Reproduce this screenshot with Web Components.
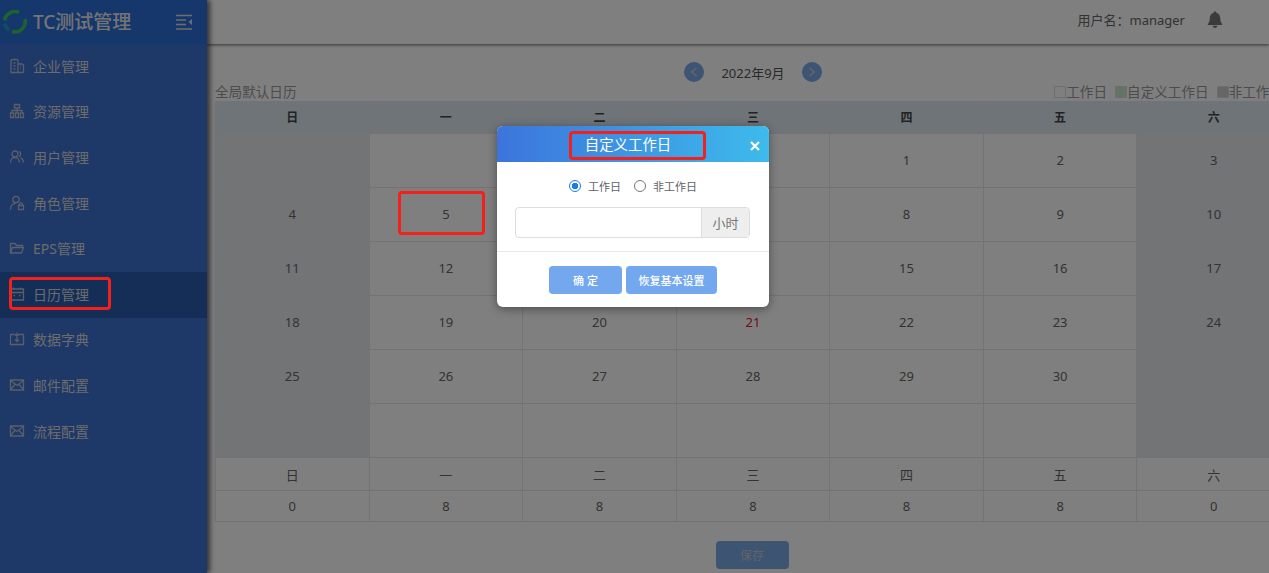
<!DOCTYPE html>
<html lang="zh">
<head>
<meta charset="utf-8">
<title>日历管理</title>
<style>
  html, body { margin: 0; height: 100%; overflow: hidden; background: #fff; }
  body { font-family: "Noto Sans", "Noto Sans CJK SC", sans-serif; color: #666; }
</style>
</head>
<body>
<app-page>
  <side-nav slot="side">
    <nav-item icon="building">企业管理</nav-item>
    <nav-item icon="org">资源管理</nav-item>
    <nav-item icon="users">用户管理</nav-item>
    <nav-item icon="role">角色管理</nav-item>
    <nav-item icon="folder">EPS管理</nav-item>
    <nav-item icon="calendar" active>日历管理</nav-item>
    <nav-item icon="book">数据字典</nav-item>
    <nav-item icon="mail">邮件配置</nav-item>
    <nav-item icon="mail">流程配置</nav-item>
  </side-nav>
  <top-bar slot="top"></top-bar>
  <calendar-view slot="main"></calendar-view>
  <work-dialog slot="over"></work-dialog>
  <red-mark slot="over" style="left:9px;top:277px;width:102px;height:33px"></red-mark>
  <red-mark slot="over" style="left:398px;top:191px;width:87px;height:44px"></red-mark>
  <red-mark slot="over" style="left:569px;top:131px;width:137px;height:29px"></red-mark>
</app-page>

<script>
const ICONS = {
  building: '<path d="M2 14.500V2.500l2-1h4l1 1v12M9 6h4l1.500 1v7.500M1.500 14.500h13M4.500 5h2M4.500 8h2M4.500 11h2M11.500 8.500h.6M11.500 11h.6"/>',
  org: '<path d="M5.500 1.500h5v3.500h-5zM8 5v2.500M3 10V7.500h10V10M8 7.500V10M1.500 10h3v4.500h-3zM6.500 10h3v4.500h-3zM11.500 10h3v4.500h-3z"/>',
  users: '<circle cx="6" cy="5" r="3"/><path d="M1.500 13.500c0-3 2-5 4.500-5s4.500 2 4.500 5M10 2.300a3 3 0 0 1 0 5.400M11.500 8.800c1.800.7 3 2.500 3 4.700"/>',
  role: '<circle cx="7" cy="4.500" r="3.200"/><path d="M1.500 14.500c0-3.500 2-6 5-6M9.500 10.500h5v4h-5zM10.500 10.500V9.300a1.500 1.500 0 0 1 3 0v1.200"/>',
  folder: '<path d="M1.500 13V3.500h4.500l1.500 2h6v2M1.500 13l2-5.500h11l-2 5.500z"/>',
  calendar: '<path d="M1.500 3h13v11h-13zM1.500 6.500h13M4.500 1.500V3M11.500 1.500V3M4.500 9.500h1.500M10 9.500h1.500"/>',
  book: '<path d="M1.500 3.500h4.500l2 1.500 2-1.500h4.500v10h-13zM8 1.500v9M6 8.500l2 2 2-2"/>',
  mail: '<path d="M1.500 3h13v10h-13zM1.500 3.500l6.500 5 6.500-5M1.500 12.500l4.500-5M14.500 12.500l-4.500-5"/>'
};

class AppPage extends HTMLElement {
  constructor() {
    super();
    this.attachShadow({ mode: 'open' });
    this.shadowRoot.innerHTML = `
      <style>
        :host { display: block; position: relative; width: 1269px; height: 573px; overflow: hidden; }
        .layout { display: grid; grid-template-columns: 207px 1fr; height: 100%; }
        .right { display: flex; flex-direction: column; min-width: 0; }
        .veil { position: absolute; inset: 0; z-index: 5; background: rgba(0, 0, 0, 0.5); }
      </style>
      <div class="layout">
        <slot name="side"></slot>
        <div class="right">
          <slot name="top"></slot>
          <slot name="main"></slot>
        </div>
      </div>
      <div class="veil"></div>
      <slot name="over"></slot>
    `;
  }
}

class RedMark extends HTMLElement {
  constructor() {
    super();
    this.attachShadow({ mode: 'open' });
    this.shadowRoot.innerHTML = `
      <style>
        :host { display: block; position: absolute; z-index: 7; box-sizing: border-box; border: 3px solid #f3211c; border-radius: 4px; }
      </style>
    `;
  }
}

class SideNav extends HTMLElement {
  constructor() {
    super();
    this.attachShadow({ mode: 'open' });
    this.shadowRoot.innerHTML = `
      <style>
        :host { display: block; position: relative; z-index: 2; background: #3c70d0; box-shadow: 3px 0 5px rgba(0, 0, 0, 0.6); }
        .brand { height: 44px; display: flex; align-items: center; background: #2a6fd8; padding: 0 14px 0 3px; }
        .brand svg.logo { width: 24px; height: 24px; flex: none; }
        .name { margin-left: 6px; flex: 1; font-size: 19px; font-weight: 500; color: #e8e8e8; white-space: nowrap; padding-bottom: 2px; }
        .fold { width: 17px; height: 16px; flex: none; }
      </style>
      <div class="brand">
        <svg class="logo" viewBox="0 0 24 24" fill="none" stroke-width="3.600">
          <path d="M1.600 10.500A10.500 10.500 0 0 1 16 2.300" stroke="#3cc45a"/>
          <path d="M22 9A10.500 10.500 0 0 1 9 21.600" stroke="#3cc45a"/>
          <path d="M1.800 13.500A10.500 10.500 0 0 0 6 20" stroke="#1f9fc8"/>
        </svg>
        <span class="name">TC测试管理</span>
        <svg class="fold" viewBox="0 0 17 16" fill="none" stroke="#ddd" stroke-width="1.500">
          <path d="M0 1.500h16M0 6h10M0 10.500h10M0 15h16"/>
          <path d="M16 5v6l-3.500-3z" fill="#ddd" stroke="none"/>
        </svg>
      </div>
      <slot></slot>
    `;
  }
}

class NavItem extends HTMLElement {
  connectedCallback() {
    if (this.shadowRoot) return;
    this.attachShadow({ mode: 'open' });
    this.shadowRoot.innerHTML = `
      <style>
        :host { display: flex; align-items: center; height: 45.600px; box-sizing: border-box; padding: 0 0 2px 9px; color: #d8d8d8; font-size: 14px; white-space: nowrap; }
        :host([active]) { background: #2a5cb0; }
        svg { width: 16px; height: 16px; margin-right: 8px; flex: none; stroke: #b4bed2; fill: none; stroke-width: 1.300; }
      </style>
      <svg viewBox="0 0 16 16">${ICONS[this.getAttribute('icon')] || ''}</svg>
      <slot></slot>
    `;
  }
}

class TopBar extends HTMLElement {
  constructor() {
    super();
    this.attachShadow({ mode: 'open' });
    this.shadowRoot.innerHTML = `
      <style>
        :host { display: flex; justify-content: flex-end; align-items: center; flex: none; height: 44px; background: #fff; box-shadow: 0 1px 3px rgba(0, 0, 0, 0.6); padding: 0 45px 5px 0; box-sizing: border-box; font-size: 13px; color: #666; position: relative; z-index: 1; }
        svg { width: 18px; height: 20px; margin-left: 21px; fill: #777; }
      </style>
      <span>用户名：manager</span>
      <svg viewBox="0 0 20 20"><path d="M10 0.500c.9 0 1.500.6 1.500 1.400 2.800.7 4.300 3 4.300 5.900 0 3.200.8 5.200 2.200 6.700v1H2v-1c1.400-1.500 2.200-3.500 2.200-6.700 0-2.900 1.500-5.200 4.300-5.900 0-.8.600-1.400 1.500-1.400zM7.500 16.500h5c0 1.400-1.100 2.500-2.500 2.500s-2.500-1.100-2.500-2.500z"/></svg>
    `;
  }
}

class CalendarView extends HTMLElement {
  constructor() {
    super();
    this.attachShadow({ mode: 'open' });
    const week = ['日', '一', '二', '三', '四', '五', '六'];
    const days = [
      ['', '', '', '', 1, 2, 3],
      [4, 5, 6, 7, 8, 9, 10],
      [11, 12, 13, 14, 15, 16, 17],
      [18, 19, 20, 21, 22, 23, 24],
      [25, 26, 27, 28, 29, 30, ''],
      ['', '', '', '', '', '', '']
    ];
    const hours = [0, 8, 8, 8, 8, 8, 0];
    const cell = (d, i) => {
      const cls = [i === 0 || i === 6 ? 'rest' : '', d === 21 ? 'red' : ''].join(' ').trim();
      return `<td class="${cls}">${d}</td>`;
    };
    this.shadowRoot.innerHTML = `
      <style>
        :host { display: block; flex: 1; position: relative; padding-left: 8px; font-size: 13px; color: #666; }
        .month { display: flex; align-items: center; justify-content: center; height: 20px; margin-top: 18px; width: 1076px; gap: 17px; }
        .month b { font-weight: 400; font-size: 13px; color: #555; }
        .round { width: 20px; height: 20px; border-radius: 50%; background: #7aa8e4; display: flex; align-items: center; justify-content: center; }
        .round svg { width: 8px; height: 10px; fill: none; stroke: #d0d0d0; stroke-width: 1.200; }
        .head { display: flex; justify-content: space-between; align-items: flex-end; width: 1068px; height: 19px; font-size: 13.600px; color: #999; white-space: nowrap; line-height: 19px; }
        .legend { display: flex; gap: 8px; }
        .legend span { display: flex; align-items: center; }
        .legend i { width: 10px; height: 10px; border: 1px solid #ddd; }
        .legend .green { background: #c9e6c9; }
        .legend .gray { background: #ccc; }
        table { table-layout: fixed; border-collapse: collapse; width: 1076px; }
        td, th { border: 1px solid #e4e7ed; text-align: center; padding: 0; font-size: 13px; }
        thead th { height: 29px; padding-bottom: 2px; background: #dfe9f3; font-size: 12px; font-weight: 700; color: #444; }
        .days td { height: 51px; padding-bottom: 2px; }
        .rest { background: #e6e8ec; }
        .red { color: #e02020; }
        .sum td { height: 32px; }
        .sum tr:last-child td { height: 30px; }
        .foot { display: flex; justify-content: center; width: 1074px; margin-top: 19px; }
        .save { width: 73px; height: 28px; border-radius: 4px; background: #7aa8e4; color: #c0c8d4; font-size: 12px; display: flex; align-items: center; justify-content: center; }
      </style>
      <div class="month">
        <span class="round"><svg viewBox="0 0 8 10"><path d="M6.500 1L1.500 5l5 4"/></svg></span>
        <b>2022年9月</b>
        <span class="round"><svg viewBox="0 0 8 10"><path d="M1.500 1l5 4-5 4"/></svg></span>
      </div>
      <div class="head">
        <span>全局默认日历</span>
        <span class="legend">
          <span><i></i>工作日</span>
          <span><i class="green"></i>自定义工作日</span>
          <span><i class="gray"></i>非工作日</span>
        </span>
      </div>
      <table>
        <thead><tr>${week.map(w => `<th>${w}</th>`).join('')}</tr></thead>
        <tbody class="days">${days.map(r => `<tr>${r.map(cell).join('')}</tr>`).join('')}</tbody>
        <tbody class="sum">
          <tr>${week.map(w => `<td>${w}</td>`).join('')}</tr>
          <tr>${hours.map(h => `<td>${h}</td>`).join('')}</tr>
        </tbody>
      </table>
      <div class="foot"><span class="save">保存</span></div>
    `;
  }
}

class WorkDialog extends HTMLElement {
  constructor() {
    super();
    this.attachShadow({ mode: 'open' });
    this.shadowRoot.innerHTML = `
      <style>
        :host { display: block; position: absolute; z-index: 6; left: 497px; top: 126px; width: 272px; height: 181px; background: #fff; border-radius: 6px; box-shadow: 0 2px 10px rgba(0, 0, 0, 0.4); font-size: 11px; color: #606266; }
        header { height: 36px; display: flex; align-items: center; justify-content: center; box-sizing: border-box; padding: 0 10px 2px 0; border-radius: 6px 6px 0 0; background: linear-gradient(90deg, #3d74dc, #3dbbeb); color: #fff; font-size: 14.400px; position: relative; }
        .close { position: absolute; right: 8px; top: 14px; width: 12px; height: 12px; }
        .radios { display: flex; justify-content: center; align-items: center; height: 17px; margin-top: 15px; }
        .radio { width: 12px; height: 12px; box-sizing: border-box; border-radius: 50%; border: 1px solid #777; margin-right: 7px; }
        .radio.on { border-color: #1a7cf0; background: radial-gradient(circle, #1a7cf0 0 3px, #fff 3.500px); }
        .radios span + .radio { margin-left: 13px; }
        .field { display: flex; margin: 13px 19px 0 18px; height: 31px; border: 1px solid #ddd; border-radius: 4px; overflow: hidden; box-sizing: border-box; }
        .field .in { flex: 1; }
        .field .unit { width: 47px; background: #eee; border-left: 1px solid #ddd; display: flex; align-items: center; justify-content: center; font-size: 13px; color: #777; }
        .line { height: 1px; background: #e8e8e8; margin-top: 13px; }
        .btns { display: flex; justify-content: center; gap: 4px; margin-top: 14px; }
        .btn { height: 28px; border-radius: 4px; background: #73a7ee; color: #fff; display: flex; align-items: center; justify-content: center; font-size: 11px; font-weight: 500; }
        .ok { width: 73px; }
        .reset { width: 91px; }
      </style>
      <header>
        <span>自定义工作日</span>
        <svg class="close" viewBox="0 0 12 12" stroke="#fff" stroke-width="2.200"><path d="M2 2l8 8M10 2l-8 8"/></svg>
      </header>
      <div class="radios">
        <i class="radio on"></i><span>工作日</span>
        <i class="radio"></i><span>非工作日</span>
      </div>
      <div class="field"><div class="in"></div><div class="unit">小时</div></div>
      <div class="line"></div>
      <div class="btns"><span class="btn ok">确 定</span><span class="btn reset">恢复基本设置</span></div>
    `;
  }
}

customElements.define('app-page', AppPage);
customElements.define('red-mark', RedMark);
customElements.define('side-nav', SideNav);
customElements.define('nav-item', NavItem);
customElements.define('top-bar', TopBar);
customElements.define('calendar-view', CalendarView);
customElements.define('work-dialog', WorkDialog);
</script>
</body>
</html>
